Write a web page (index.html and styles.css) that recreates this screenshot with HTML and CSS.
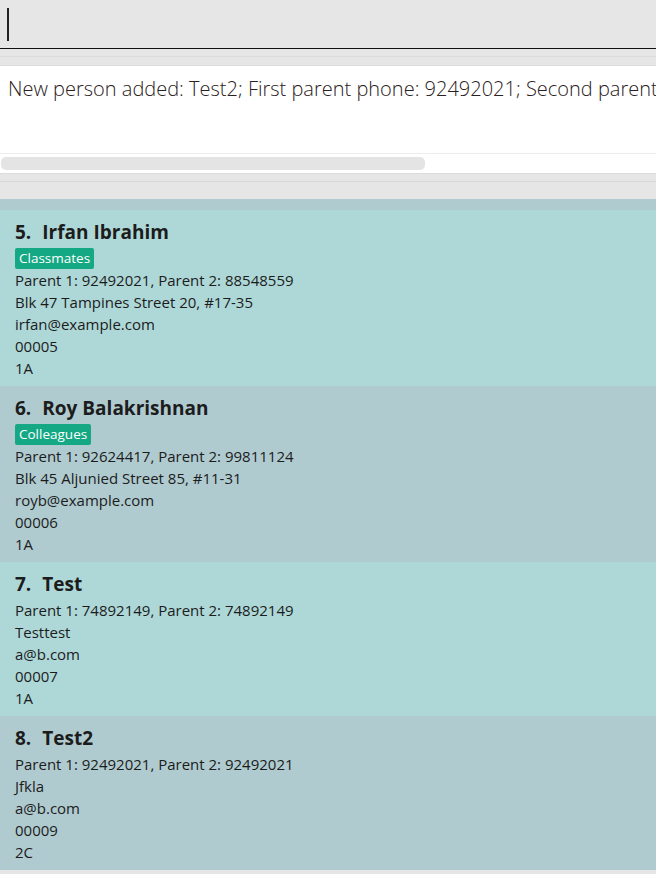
FILE: index.html
```html
<!DOCTYPE html>
<html>
<head>
<meta charset="utf-8">
<link rel="stylesheet" href="styles.css">
</head>
<body>
<div class="app">
  <div class="command"><span class="caret"></span></div>
  <div class="sep sep-top"></div>
  <div class="result">
    <div class="result-text">New person added: Test2; First parent phone: 92492021; Second parent phone: 92492021; Address: Jfkla; Email: a@b.com</div>
    <div class="hscroll"><div class="thumb"></div></div>
  </div>
  <div class="sep sep-bottom"></div>
  <div class="list">
    <div class="stripe"></div>
    <div class="card odd">
      <div class="name"><span class="idx">5.</span><span>Irfan Ibrahim</span></div>
      <div class="tags"><span class="tag">Classmates</span></div>
      <div class="line">Parent 1: 92492021, Parent 2: 88548559</div>
      <div class="line">Blk 47 Tampines Street 20, #17-35</div>
      <div class="line">irfan@example.com</div>
      <div class="line">00005</div>
      <div class="line">1A</div>
    </div>
    <div class="card even">
      <div class="name"><span class="idx">6.</span><span>Roy Balakrishnan</span></div>
      <div class="tags"><span class="tag">Colleagues</span></div>
      <div class="line">Parent 1: 92624417, Parent 2: 99811124</div>
      <div class="line">Blk 45 Aljunied Street 85, #11-31</div>
      <div class="line">royb@example.com</div>
      <div class="line">00006</div>
      <div class="line">1A</div>
    </div>
    <div class="card odd">
      <div class="name"><span class="idx">7.</span><span>Test</span></div>
      <div class="line">Parent 1: 74892149, Parent 2: 74892149</div>
      <div class="line">Testtest</div>
      <div class="line">a@b.com</div>
      <div class="line">00007</div>
      <div class="line">1A</div>
    </div>
    <div class="card even">
      <div class="name"><span class="idx">8.</span><span>Test2</span></div>
      <div class="line">Parent 1: 92492021, Parent 2: 92492021</div>
      <div class="line">Jfkla</div>
      <div class="line">a@b.com</div>
      <div class="line">00009</div>
      <div class="line">2C</div>
    </div>
  </div>
</div>
</body>
</html>
```
FILE: styles.css
```css
html, body {
  margin: 0;
  padding: 0;
  background: #e6e6e6;
}
.app {
  width: 656px;
  height: 874px;
  overflow: hidden;
  font-family: "Open Sans", "Noto Sans", sans-serif;
  color: #1c1c1c;
}
.command {
  height: 48px;
  background: #e6e6e6;
  border-bottom: 1px solid #111;
  display: flex;
  align-items: center;
  padding-left: 7px;
}
.caret {
  width: 2px;
  height: 33px;
  background: #222;
}
.sep {
  background: #e6e6e6;
  box-sizing: border-box;
}
.sep-top {
  height: 17px;
  border-top: 7px solid #e6e6e6;
  border-bottom: 1px solid #dcdcdc;
  box-shadow: inset 0 1px 0 #dcdcdc;
}
.result {
  background: #fff;
  height: 107px;
  display: flex;
  flex-direction: column;
  overflow: hidden;
}
.result-text {
  flex: 1;
  padding: 9px 0 0 8px;
  font-weight: 300;
  font-size: 20px;
  line-height: 28px;
  white-space: nowrap;
  overflow: hidden;
  color: #2a2020;
  border-bottom: 1px solid #ececec;
}
.hscroll {
  height: 19px;
  padding: 3px 0 0 1px;
  box-sizing: border-box;
}
.thumb {
  width: 424px;
  height: 13px;
  background: #e4e4e4;
  border-radius: 5px;
}
.sep-bottom {
  height: 26px;
  border-top: 1px solid #dcdcdc;
  box-shadow: inset 0 8px 0 -1px #e6e6e6, inset 0 9px 0 -1px #d8d8d8;
}
.list {
  display: flex;
  flex-direction: column;
}
.stripe {
  height: 11px;
  background: #afcbd0;
}
.card {
  padding: 8px 15px 7px;
  display: flex;
  flex-direction: column;
}
.odd { background: #aed8d8; }
.even { background: #afcbd0; }
.name {
  font-weight: 700;
  font-size: 19px;
  line-height: 29px;
  display: flex;
  gap: 11px;
}
.tags {
  height: 22px;
  display: flex;
  align-items: flex-start;
  padding-top: 1px;
  box-sizing: border-box;
}
.tag {
  background: #14a884;
  color: #fff;
  font-size: 13.5px;
  line-height: 21px;
  padding: 0 4px;
  border-radius: 2px;
}
.line {
  font-size: 15px;
  line-height: 22px;
}
```
